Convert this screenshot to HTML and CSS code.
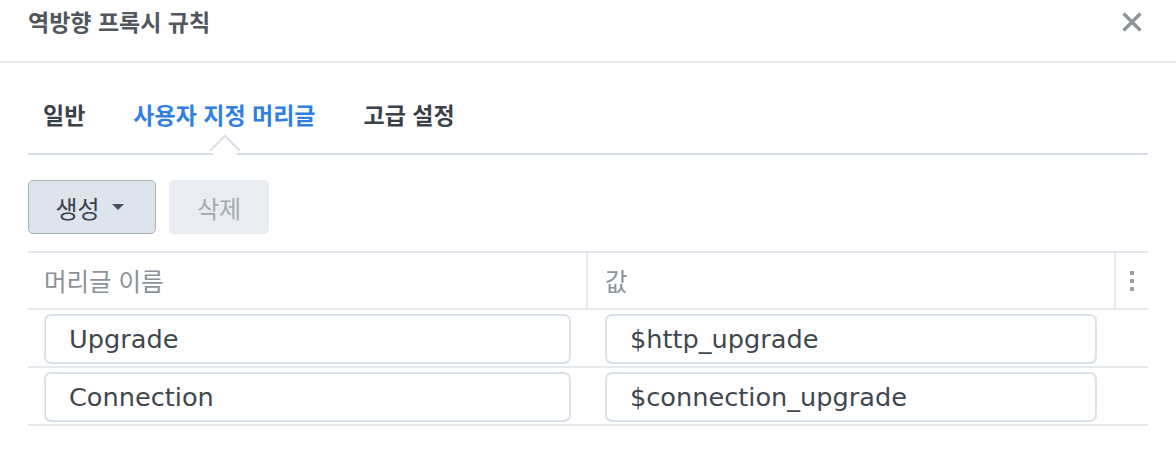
FILE: index.html
```html
<!DOCTYPE html>
<html lang="ko">
<head>
<meta charset="utf-8">
<title>역방향 프록시 규칙</title>
<link rel="stylesheet" href="styles.css">
</head>
<body>
<div class="dialog">
  <header class="header">
    <h1 class="title">역방향 프록시 규칙</h1>
    <button class="close" aria-label="닫기">
      <svg width="22" height="22" viewBox="0 0 22 22"><path d="M2.5 2.5 L19.5 19.5 M19.5 2.5 L2.5 19.5" stroke="#8f949a" stroke-width="3.4" fill="none"/></svg>
    </button>
  </header>
  <div class="content">
    <nav class="tabs">
      <span class="tab">일반</span>
      <span class="tab active">사용자 지정 머리글</span>
      <span class="tab">고급 설정</span>
    </nav>
    <div class="toolbar">
      <button class="btn btn-create">생성 <span class="caret"></span></button>
      <button class="btn btn-delete" disabled>삭제</button>
    </div>
    <div class="grid">
      <div class="row head">
        <div class="cell c1">머리글 이름</div>
        <div class="cell c2">값</div>
        <div class="cell c3"><span class="kebab"><i></i><i></i><i></i></span></div>
      </div>
      <div class="row">
        <div class="cell c1"><div class="input">Upgrade</div></div>
        <div class="cell c2"><div class="input">$http_upgrade</div></div>
        <div class="cell c3"></div>
      </div>
      <div class="row">
        <div class="cell c1"><div class="input">Connection</div></div>
        <div class="cell c2"><div class="input">$connection_upgrade</div></div>
        <div class="cell c3"></div>
      </div>
    </div>
  </div>
</div>
</body>
</html>
```

FILE: styles.css
```css
* { box-sizing: border-box; }
html, body { margin: 0; padding: 0; background: #fff; }
body {
  font-family: "Noto Sans CJK KR", "DejaVu Sans", sans-serif;
  color: #3f4750;
}
.header {
  height: 63px;
  border-bottom: 2px solid #e4e8ed;
  display: flex;
  align-items: flex-start;
  justify-content: space-between;
  padding: 0 28px;
}
.title {
  margin: 0;
  margin-top: 4px;
  font-size: 23px;
  font-weight: 700;
  color: #51575e;
  line-height: 34px;
}
.close {
  border: 0;
  background: none;
  padding: 0;
  margin-top: 11px;
  margin-right: 5px;
  width: 22px;
  height: 22px;
}
.close svg { display: block; }
.content { padding: 0 28px; }
.tabs {
  display: flex;
  gap: 48px;
  padding-left: 15px;
  height: 92px;
  align-items: center;
  padding-top: 12px;
  border-bottom: 2px solid #d7dee7;
  position: relative;
}
.tab {
  font-size: 23px;
  font-weight: 700;
  color: #3b4148;
  position: relative;
  height: 50px;
  line-height: 50px;
}
.tab.active { color: #2f80e2; }
.tab.active::after {
  content: "";
  position: absolute;
  left: 50%;
  bottom: -22px;
  width: 20px;
  height: 20px;
  margin-left: -10px;
  background: #fff;
  border-left: 2px solid #d7dee7;
  border-top: 2px solid #d7dee7;
  transform: rotate(45deg);
}
.toolbar {
  display: flex;
  gap: 13px;
  margin-top: 25px;
}
.btn {
  font-family: "Noto Sans CJK KR", sans-serif;
  font-size: 24px;
  height: 54px;
  border-radius: 5px;
  padding: 0;
}
.btn-create {
  width: 128px;
  background: #dee4ec;
  border: 1px solid #a7b0bb;
  color: #3b4148;
  display: flex;
  align-items: center;
  justify-content: center;
  gap: 12px;
  padding-right: 5px;
}
.caret {
  width: 0; height: 0;
  border-left: 6px solid transparent;
  border-right: 6px solid transparent;
  border-top: 6px solid #4a5058;
}
.btn-delete {
  width: 100px;
  background: #e9edf2;
  border: 1px solid #e9edf2;
  color: #a3aab2;
}
.grid {
  margin-top: 17px;
  border-top: 2px solid #e2e7ed;
}
.row {
  display: grid;
  grid-template-columns: 560px 528px 32px;
  border-bottom: 2px solid #e6eaef;
}
.row.head { height: 57px; }
.row.head .cell {
  display: flex;
  align-items: center;
  padding-left: 16px;
  font-size: 24.5px;
  color: #8b9299;
}
.row.head .c2 { padding-left: 17px; }
.row.head .c1, .row.head .c2 { border-right: 2px solid #e6eaef; }
.row.head .c3 { justify-content: center; padding-left: 0; }
.kebab { display: flex; flex-direction: column; gap: 4px; }
.kebab i { display: block; width: 4px; height: 4px; background: #9aa0a6; }
.row:not(.head) { height: 58px; padding-top: 4px; }
.row:not(.head) .c1 { padding: 0 17px 0 16px; }
.row:not(.head) .c2 { padding: 0 19px 0 17px; }
.input {
  height: 50px;
  border: 2px solid #d9e1ea;
  border-radius: 7px;
  padding-left: 23px;
  display: flex;
  align-items: center;
  font-family: "DejaVu Sans", sans-serif;
  font-size: 25.6px;
  color: #3f4750;
}
```
